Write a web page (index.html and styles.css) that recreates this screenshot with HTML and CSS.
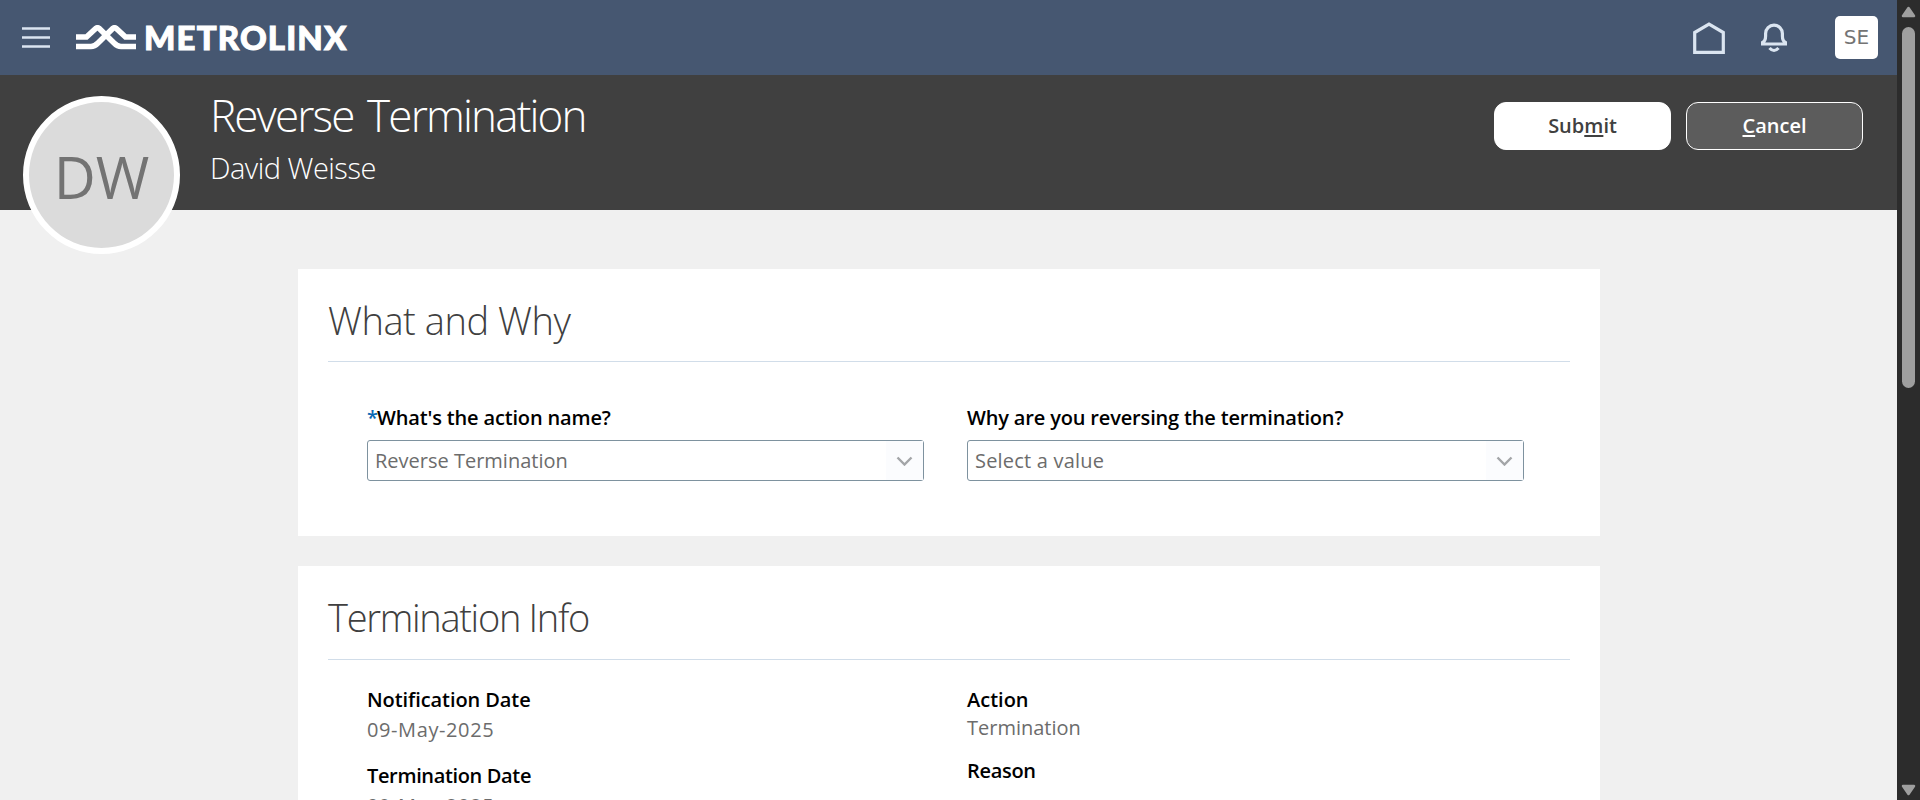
FILE: index.html
```html
<!DOCTYPE html>
<html lang="en">
<head>
<meta charset="utf-8">
<title>Reverse Termination</title>
<link rel="stylesheet" href="styles.css">
</head>
<body>
<div class="app">
<div class="page">
  <header class="topbar">
    <svg class="menu-icon" width="28" height="22" viewBox="0 0 28 22"><path d="M0 1.5h28M0 10.5h28M0 19.5h28" stroke="#dbe5f1" stroke-width="2.700"/></svg>
    <div class="logo">
      <svg class="logo-mark" width="60" height="25" viewBox="0 0 60 25" fill="none" stroke="#fff" stroke-width="5.600"><path d="M0 12H10.500L20 3.300Q21.500 2.300 23 3.300L38 18Q41.500 21.500 45 21.500H60"/><path d="M0 21.500H15Q18.500 21.500 22 18L37 3.300Q38.500 2.300 40 3.300L49.500 12H60"/></svg>
      <span class="logo-text">METROLINX</span>
    </div>
    <div class="top-actions">
      <svg class="home-icon" width="32" height="32" viewBox="0 0 32 32"><path d="M1.700 30.300V10.500L16 2l14.300 8.500v19.800z" fill="none" stroke="#dbe5f1" stroke-width="3.200"/></svg>
      <svg class="bell-icon" width="26" height="30" viewBox="0 0 26 30" fill="none" stroke="#dbe5f1" stroke-width="3.200"><path d="M1.600 21v-1.500q3-1.500 3-6.500V10.500a8.400 8.400 0 0 1 16.800 0V13q0 5 3 6.500V21z"/><path d="M8.500 25q4.500 5 9 0"/></svg>
      <span class="user">SE</span>
    </div>
  </header>
  <section class="banner">
    <div class="avatar">DW</div>
    <div class="heading">
      <h1 class="title">Reverse Termination</h1>
      <p class="person">David Weisse</p>
    </div>
    <div class="buttons">
      <button class="btn btn-primary">Sub<u>m</u>it</button>
      <button class="btn btn-secondary"><u>C</u>ancel</button>
    </div>
  </section>
  <main class="content">
    <section class="card card-what">
      <h2 class="card-title">What and Why</h2>
      <div class="fields">
        <div class="field">
          <label class="label"><i class="req">*</i>What's the action name?</label>
          <div class="select">Reverse Termination<b class="drop"><svg width="17" height="10" viewBox="0 0 17 10"><path d="M1.500 1.500l7 7 7-7" fill="none" stroke="#a3a5a8" stroke-width="2.400"/></svg></b></div>
        </div>
        <div class="field">
          <label class="label">Why are you reversing the termination?</label>
          <div class="select select-empty">Select a value<b class="drop"><svg width="17" height="10" viewBox="0 0 17 10"><path d="M1.500 1.500l7 7 7-7" fill="none" stroke="#a3a5a8" stroke-width="2.400"/></svg></b></div>
        </div>
      </div>
    </section>
    <section class="card card-info">
      <h2 class="card-title">Termination Info</h2>
      <div class="facts">
        <dl class="col col-dates"><dt class="notified">Notification Date</dt><dd>09-May-2025</dd><dt>Termination Date</dt><dd>09-May-2025</dd></dl>
        <dl class="col col-action"><dt>Action</dt><dd>Termination</dd><dt class="reason">Reason</dt></dl>
      </div>
    </section>
  </main>
</div>
<aside class="scrollbar">
  <svg width="15" height="12" viewBox="0 0 15 12"><path d="M7.500 2L13 10H2z" fill="#9f9f9f" stroke="#9f9f9f" stroke-width="2.500" stroke-linejoin="round"/></svg>
  <i class="thumb"></i>
  <svg class="down" width="15" height="12" viewBox="0 0 15 12"><path d="M7.500 10L13 2H2z" fill="#9f9f9f" stroke="#9f9f9f" stroke-width="2.500" stroke-linejoin="round"/></svg>
</aside>
</div>
</body>
</html>
```
FILE: styles.css
```css
*{box-sizing:border-box;margin:0;padding:0}
body{font-family:"Open Sans","Noto Sans",sans-serif;background:#f0f0f0;overflow:hidden}
.app{display:flex;height:800px}
.page{flex:1;overflow:hidden}
.topbar{display:flex;align-items:center;height:75px;background:#465771;padding:0 19px 0 22px}
.menu-icon{margin-right:26px}
.logo{display:flex;align-items:center;gap:8px}
.logo-text{font:900 33px/40px Lato,sans-serif;color:#fff;letter-spacing:1.15px;padding-bottom:2px;-webkit-text-stroke:1px #fff}
.top-actions{display:flex;align-items:center;margin-left:auto}
.home-icon{margin-right:36px}
.bell-icon{margin-right:48px}
.user{width:43px;height:43px;border-radius:5px;background:#fff;color:#747474;font:20px/43px "DejaVu Sans",sans-serif;text-align:center}
.banner{display:flex;height:135px;background:#404040;padding:0 34px 0 23px}
.avatar{position:relative;width:157px;height:158px;margin-top:21px;border:6px solid #fff;border-radius:50%;background:#dbdbdb;color:#737373;font-size:58px;line-height:150px;text-align:center}
.heading{margin:10px 0 0 30px;color:#fff}
.title{font-size:44px;line-height:60px;font-weight:300;letter-spacing:-1.85px;word-spacing:4px}
.person{font-size:29px;line-height:40px;font-weight:300;margin-top:3px;letter-spacing:-.5px}
.buttons{display:flex;gap:15px;margin:27px 0 0 auto}
.btn{width:177px;height:48px;border-radius:12px;font:600 20px/44px "Open Sans",sans-serif;border:1px solid #fff}
.btn u{text-decoration-thickness:2px;text-underline-offset:2px}
.btn-primary{background:#fff;color:#404040}
.btn-secondary{background:#5c5c5c;color:#fff}
.content{padding:59px 297px 0 298px}
.card{background:#fff;padding:26px 30px 0}
.card-what{height:267px}
.card-info{height:300px;margin-top:30px}
.card-title{font-size:38px;line-height:50px;height:67px;font-weight:300;letter-spacing:-.45px;color:#404040;border-bottom:1px solid #d1dde9}
.card-info .card-title{height:68px;letter-spacing:-1.3px}
.fields{display:flex;gap:43px;padding:42px 0 0 39px}
.field{width:557px}
.label{display:flex;font-size:20px;line-height:28px;font-weight:600;letter-spacing:-.16px;color:#000;white-space:nowrap}
.req{color:#0a69b5;font-style:normal;width:10px}
.select{display:flex;height:41px;margin-top:8px;border:1px solid #7e929f;border-radius:3px;padding-left:7px;font-size:20px;line-height:39px;font-weight:500;color:#6c6c6c}
.select-empty{letter-spacing:.2px}
.drop{display:flex;align-items:center;justify-content:center;width:37px;margin-left:auto;background:#fbfcfe}
.facts{display:flex;padding:26px 0 0 39px}
.col{width:600px;font-size:20px;line-height:28px}
.col dt{font-weight:600;color:#000;letter-spacing:-.35px}
.col .notified{letter-spacing:-.08px}
.col dd{font-weight:500;color:#6c6c6c}
.col-dates dd{margin:2px 0 18px;letter-spacing:.6px}
.col-action dt{letter-spacing:0}
.col .reason{letter-spacing:-.3px}
.col-action dd{margin:0 0 15px}
.scrollbar{display:flex;flex-direction:column;align-items:center;width:23px;background:#2c2c2c;padding:6px 0 4px}
.thumb{width:13px;height:361px;margin-top:9px;border-radius:7px;background:#9f9f9f}
.down{margin-top:auto}
```
